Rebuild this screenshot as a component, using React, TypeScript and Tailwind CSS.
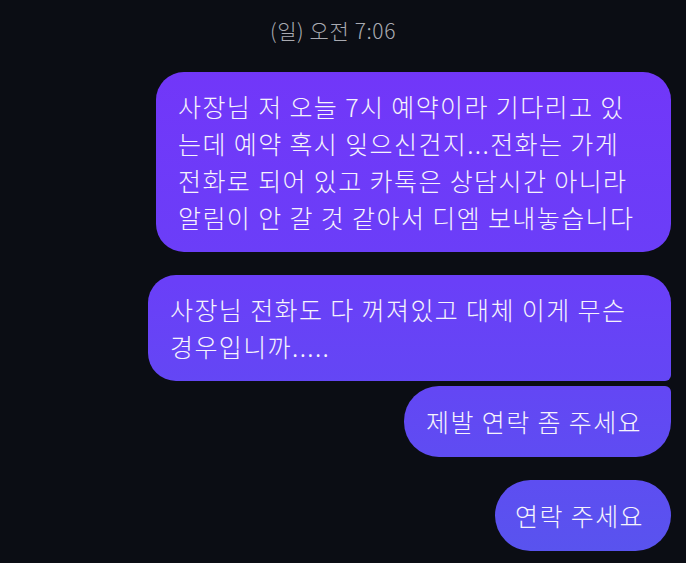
const bubble =
  "text-[25px] leading-[37px] font-light tracking-[1.4px] text-[#f6f4fc] bg-[linear-gradient(180deg,#7434f9_0%,#6a3ff8_50%,#5854ee_100%)] bg-fixed";

export default function App() {
  return (
    <div
      className="w-[686px] h-[563px] bg-[#0b0d14] overflow-hidden flex flex-col"
      style={{ fontFamily: '"Noto Sans CJK KR", "Noto Sans", sans-serif' }}
    >
      <div className="pt-[15px] pr-[20px] flex justify-center text-[21px] leading-[30px] tracking-[0.6px] font-light text-[#a9aab1]">
        (일) 오전 7:06
      </div>

      <div className="flex flex-col items-end pr-[15px] mt-[27px]">
        <div className={`${bubble} w-[515px] rounded-[28px] px-[22px] py-[16px] whitespace-nowrap`}>
          사장님 저 오늘 7시 예약이라 기다리고 있<br />
          는데 예약 혹시 잊으신건지...전화는 가게<br />
          전화로 되어 있고 카톡은 상담시간 아니라<br />
          알림이 안 갈 것 같아서 디엠 보내놓습니다
        </div>

        <div
          className={`${bubble} w-[523px] mt-[23px] rounded-[28px] rounded-br-[6px] px-[22px] py-[16px] whitespace-nowrap`}
        >
          사장님 전화도 다 꺼져있고 대체 이게 무슨<br />
          경우입니까.....
        </div>

        <div
          className={`${bubble} w-[267px] mt-[5px] rounded-[35px] rounded-tr-[6px] px-[22px] py-[17px] whitespace-nowrap`}
        >
          제발 연락 좀 주세요
        </div>

        <div
          className={`${bubble} w-[176px] mt-[23px] rounded-full px-[20px] py-[17px] whitespace-nowrap`}
        >
          연락 주세요
        </div>
      </div>
    </div>
  );
}
